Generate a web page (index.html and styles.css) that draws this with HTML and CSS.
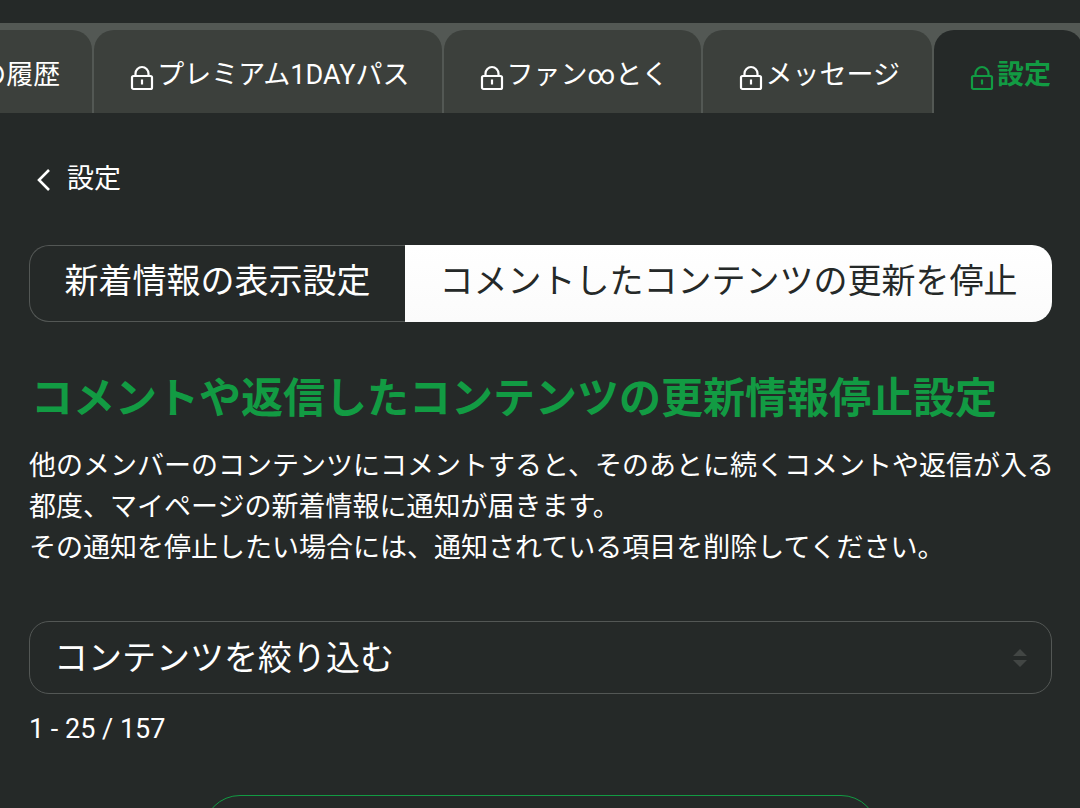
FILE: index.html
```
<!DOCTYPE html>
<html lang="ja">
<head>
<meta charset="UTF-8">
<meta name="viewport" content="width=device-width, initial-scale=1.0">
<title>設定</title>
<link rel="stylesheet" href="styles.css">
</head>
<body>
  <svg class="defs" width="0" height="0" aria-hidden="true">
    <symbol id="lock" viewBox="0 0 24 26">
      <rect x="2" y="11" width="20" height="13" rx="1.5" fill="none" stroke="currentColor" stroke-width="2.2"/>
      <path d="M5.5 11V8.500a6.500 6.500 0 0 1 13 0V11" fill="none" stroke="currentColor" stroke-width="2.2"/>
      <path d="M12 14.500v5" fill="none" stroke="currentColor" stroke-width="2.2"/>
    </symbol>
  </svg>

  <nav class="tabs">
    <a href="#" class="tab">の履歴</a>
    <a href="#" class="tab"><svg class="lock"><use href="#lock"/></svg>プレミアム1DAYパス</a>
    <a href="#" class="tab"><svg class="lock"><use href="#lock"/></svg>ファン∞とく</a>
    <a href="#" class="tab"><svg class="lock"><use href="#lock"/></svg>メッセージ</a>
    <a href="#" class="tab active"><svg class="lock"><use href="#lock"/></svg>設定</a>
  </nav>

  <main>
    <a href="#" class="back">
      <svg width="14" height="24" viewBox="0 0 14 24"><path d="M12 2L2 12l10 10" fill="none" stroke="currentColor" stroke-width="2.6"/></svg>
      設定
    </a>

    <div class="switch">
      <a href="#">新着情報の表示設定</a>
      <a href="#" class="current">コメントしたコンテンツの更新を停止</a>
    </div>

    <h1>コメントや返信したコンテンツの更新情報停止設定</h1>
    <p class="lead">他のメンバーのコンテンツにコメントすると、そのあとに続くコメントや返信が入る都度、マイページの新着情報に通知が届きます。<br>その通知を停止したい場合には、通知されている項目を削除してください。</p>

    <div class="filter">
      <select aria-label="コンテンツを絞り込む">
        <option>コンテンツを絞り込む</option>
      </select>
      <svg class="arrows" width="14" height="18" viewBox="0 0 14 18"><path d="M7 0l7 7H0zM7 18l7-7H0z" fill="currentColor"/></svg>
    </div>

    <p class="count">1 - 25 / 157</p>
    <button type="button" class="more" aria-label="前へ"></button>
  </main>
</body>
</html>
```
FILE: styles.css
```
* {
  box-sizing: border-box;
}
body {
  margin: 0;
  padding-top: 23px;
  height: 100vh;
  overflow: hidden;
  background-color: #252928;
  color: #fff;
  font-family: Roboto, "Noto Sans CJK JP", sans-serif;
  font-size: 27px;
  line-height: 41px;
}
a {
  color: inherit;
  text-decoration: none;
}
.defs {
  display: block;
}
.tabs {
  display: flex;
  justify-content: flex-end;
  gap: 2px;
  height: 90px;
  padding-top: 7px;
  margin-right: -3px;
  background-color: #535854;
}
.tab {
  display: flex;
  flex-shrink: 0;
  align-items: center;
  padding: 8px 32px 0 36px;
  padding-bottom: 0;
  border-radius: 20px 20px 0 0;
  background-color: #3c403c;
  white-space: nowrap;
}
.tab.active {
  background-color: #252928;
  color: #129b43;
  font-weight: bold;
}
.lock {
  width: 24px;
  height: 26px;
  margin: 4px 3px 0 0;
}
main {
  padding: 46px 28px 0 29px;
}
.back {
  display: flex;
  align-items: center;
  gap: 16px;
  padding-left: 8px;
}
.switch {
  display: flex;
  margin-top: 45px;
  height: 77px;
  font-size: 34px;
  line-height: 71px;
  white-space: nowrap;
}
.switch a {
  flex: 1 0 auto;
  border: 1px solid #535755;
  border-right: none;
  border-radius: 20px 0 0 20px;
  text-align: center;
}
.switch .current {
  border: none;
  border-radius: 0 20px 20px 0;
  background: linear-gradient(#fff, #fbfbfb);
  color: #252928;
  line-height: 73px;
}
h1 {
  margin: 46px 0 0 2px;
  color: #129b43;
  font-size: 42px;
  line-height: 62px;
}
.lead {
  margin: 16px -8px 0 0;
}
.filter {
  position: relative;
  margin-top: 52px;
}
.filter select {
  display: block;
  width: 100%;
  height: 73px;
  padding: 0 60px 0 24px;
  border: 1px solid #535755;
  border-radius: 20px;
  appearance: none;
  background: transparent;
  color: inherit;
  font-family: inherit;
  font-size: 34px;
}
.arrows {
  position: absolute;
  right: 25px;
  top: 28px;
  color: #424644;
}
.count {
  margin: 15px 0 0;
}
.more {
  display: block;
  width: 66%;
  height: 74px;
  margin: 45px auto 0;
  border: 1px solid #129b43;
  border-radius: 37px;
  background: transparent;
}
```
